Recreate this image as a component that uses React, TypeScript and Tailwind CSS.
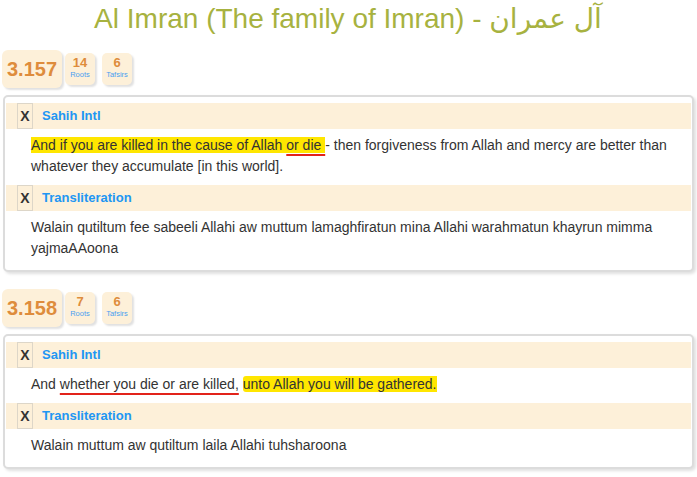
import React from 'react';

type Verse = {
	num: string;
	roots: number;
	tafsirs: number;
	sahih: React.ReactNode;
	translit: string;
};

const verses: Verse[] = [
	{
		num: '3.157',
		roots: 14,
		tafsirs: 6,
		sahih: (
			<>
				<span className="bg-[#ffe600]">And if you are killed in the cause of Allah </span>
				<span className="bg-[#ffe600] underline decoration-[#e2231a] decoration-2 underline-offset-[4px]">or die </span>
				- then forgiveness from Allah and mercy are better than whatever they accumulate [in this world].
			</>
		),
		translit:
			'Walain qutiltum fee sabeeli Allahi aw muttum lamaghfiratun mina Allahi warahmatun khayrun mimma yajmaAAoona',
	},
	{
		num: '3.158',
		roots: 7,
		tafsirs: 6,
		sahih: (
			<>
				And{' '}
				<span className="underline decoration-[#e2231a] decoration-2 underline-offset-[4px]">whether you die or are killed,</span>{' '}
				<span className="bg-[#ffe600] rounded-l-[3px]">unto Allah you will be gathered.</span>
			</>
		),
		translit: 'Walain muttum aw qutiltum laila Allahi tuhsharoona',
	},
];

function SmallBadge({ n, label, className }: { n: number; label: string; className: string }) {
	return (
		<div className={'w-[30px] h-[32px] mt-[3px] rounded-[5px] bg-[#fdf0d9] shadow-[2px_2px_2px_rgba(0,0,0,0.12)] flex flex-col items-center ' + className}>
			<div className="pt-[2px] text-[13px] leading-[15px] font-bold text-[#de8c3c]">{n}</div>
			<div className="text-[7.5px] leading-[10px] text-[#4a9ff0]">{label}</div>
		</div>
	);
}

function SectionHead({ title }: { title: string }) {
	return (
		<div className="h-[26px] bg-[#fdf0d9] flex items-stretch">
			<div className="ml-[11px] w-[16px] border border-[#ddd6c8] flex items-center justify-center text-[14px] font-bold text-[#333]">X</div>
			<div className="ml-[9px] flex items-center text-[13px] font-bold text-[#2196f3]">{title}</div>
		</div>
	);
}

function VerseBlock({ v, first }: { v: Verse; first: boolean }) {
	return (
		<div className={first ? '' : 'mt-[17px]'}>
			<div className="flex items-start">
				<div className="w-[60px] h-[38px] rounded-[6px] bg-[#fdf0d9] shadow-[2px_2px_2px_rgba(0,0,0,0.12)] flex items-center justify-center text-[20px] font-bold text-[#de8c3c]">
					{v.num}
				</div>
				<SmallBadge n={v.roots} label="Roots" className="ml-[3px]" />
				<SmallBadge n={v.tafsirs} label="Tafsirs" className="ml-[7px]" />
			</div>
			<div className="mt-[7px] ml-[1px] border-2 border-[#dcdcdc] rounded-[5px] bg-white shadow-[2px_2px_3px_rgba(0,0,0,0.12)] px-[1px] pt-[6px] pb-[3px]">
				<SectionHead title="Sahih Intl" />
				<p className="pl-[25px] pr-[4px] pt-[6px] pb-[8px] leading-[21px]">{v.sahih}</p>
				<SectionHead title="Transliteration" />
				<p className="pl-[25px] pr-[4px] pt-[6px] pb-[8px] leading-[21px]">{v.translit}</p>
			</div>
		</div>
	);
}

export default function App() {
	return (
		<div className="w-[697px] h-[477px] overflow-hidden bg-white pl-[2px] pr-[3px] text-[14px] text-[#333] font-['Liberation_Sans',Arial,'DejaVu_Sans',sans-serif]">
			<h1 className="pt-[1px] text-center text-[28px] leading-[36px] font-normal text-[#a7b240]">
				Al Imran (The family of Imran) - آل عمران
			</h1>
			<div className="mt-[13px]">
				{verses.map((v, i) => (
					<VerseBlock key={v.num} v={v} first={i === 0} />
				))}
			</div>
		</div>
	);
}
